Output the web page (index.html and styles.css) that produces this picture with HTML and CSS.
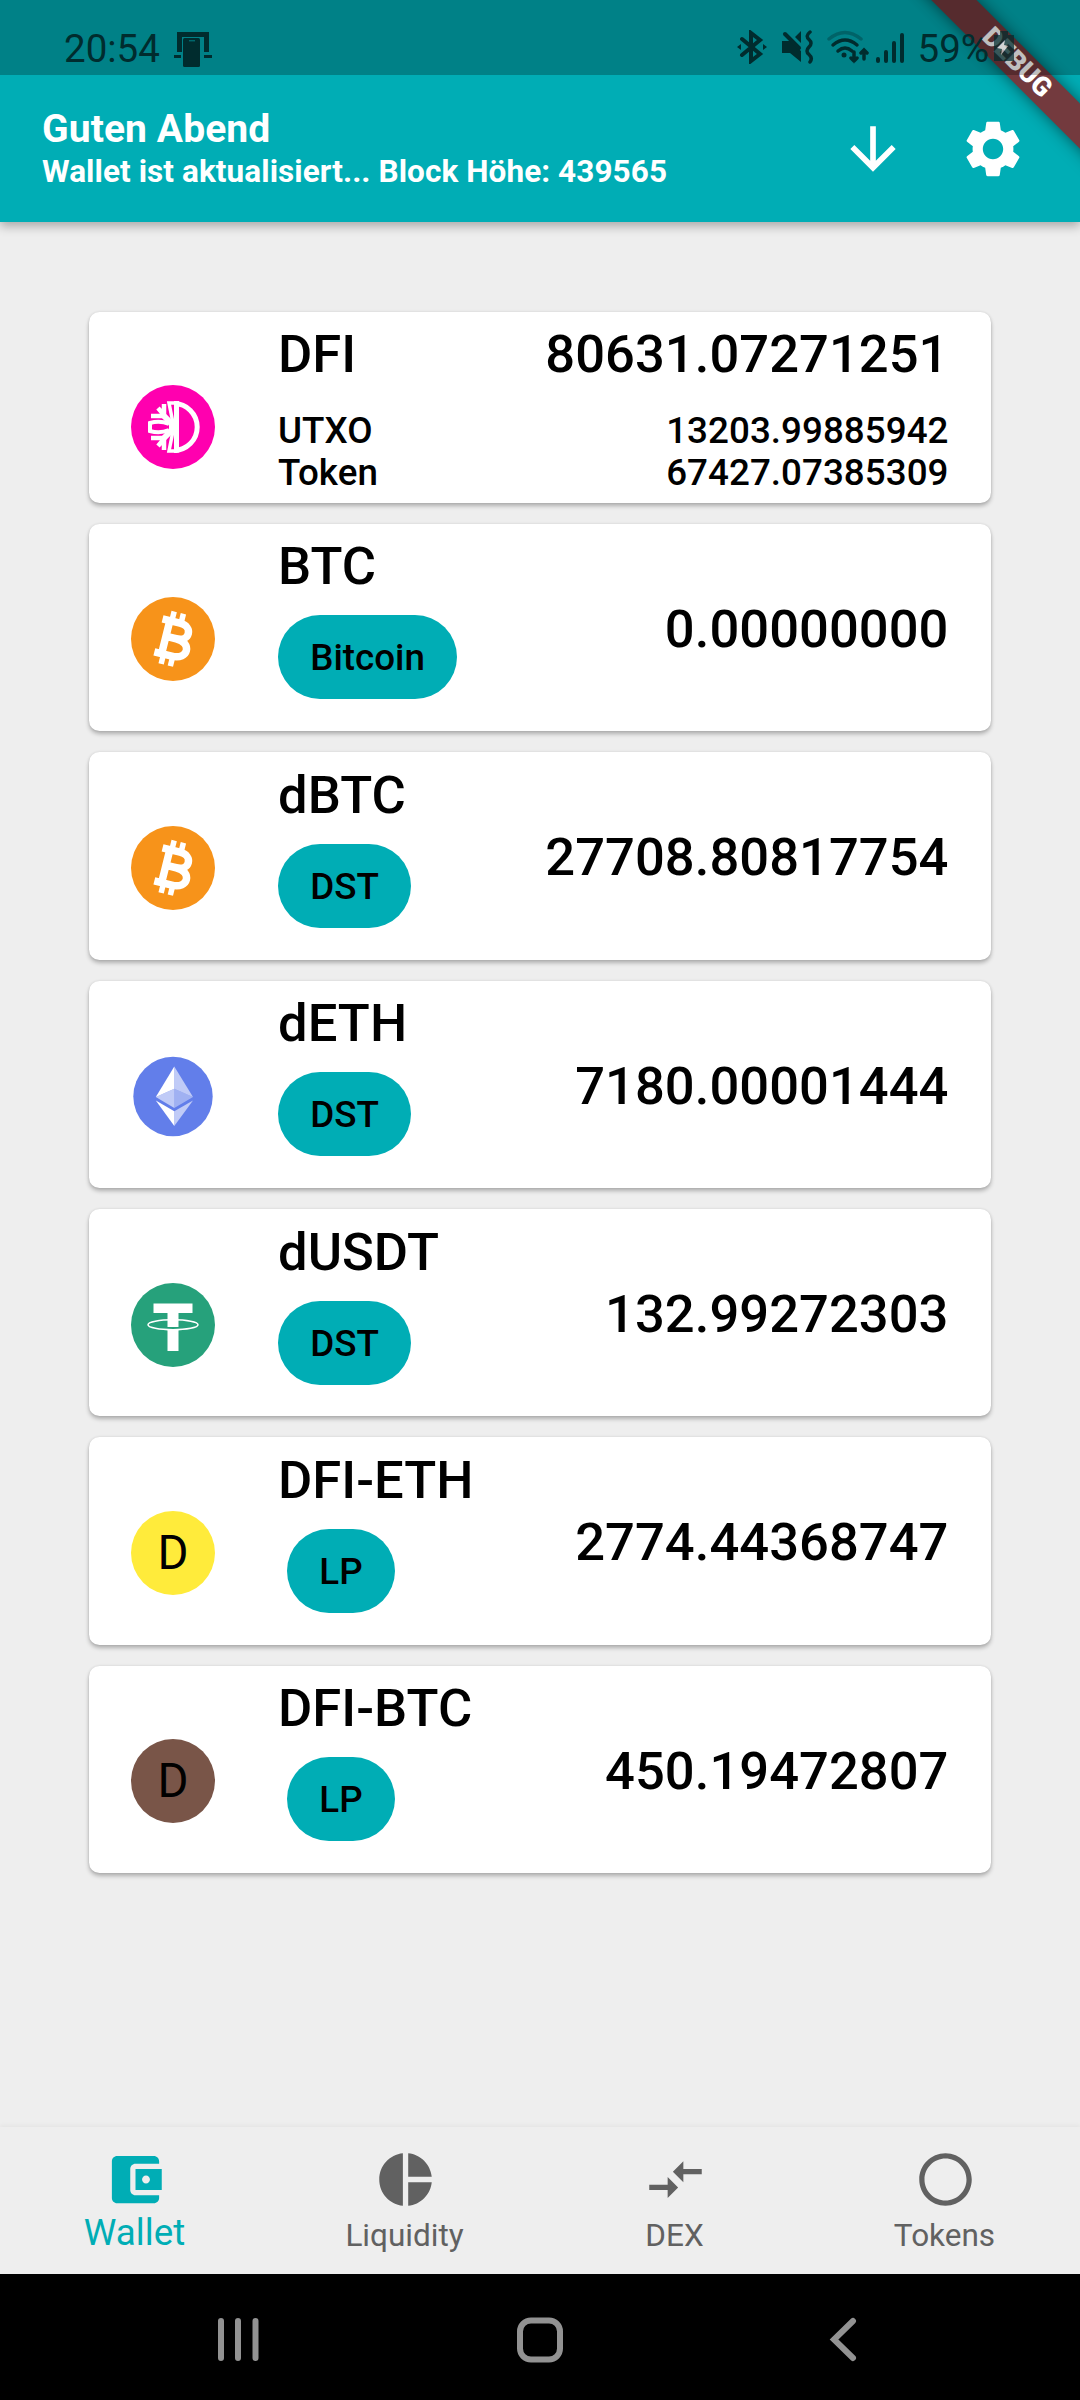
FILE: index.html
```
<!DOCTYPE html>
<html lang="de">
<head>
  <meta charset="UTF-8">
  <title>Wallet</title>
  <link rel="stylesheet" href="styles.css">
</head>
<body>
  <header class="top">
    <div class="status-bar">
      <div class="status-left">
        <span>20:54</span>
        <svg width="38" height="36" viewBox="0 0 38 36">
          <path d="M3 0h32v20h-5V5H8v15H3z"/>
          <path d="M0 23h7v3H0zM30 23h8v3h-8z"/>
          <rect x="9" y="6" width="17" height="29" rx="1.5"/>
          <path class="hole" d="M15 8.300h6v1h-6z"/>
        </svg>
      </div>
      <div class="status-right">
        <svg class="bt" width="30" height="34" viewBox="0 0 30 34">
          <path class="line" d="M5 9l18 15-9 7V3l9 7L5 25"/>
          <path d="M0 17l4-3v6zM30 17l-4-3v6z"/>
        </svg>
        <svg class="mute" width="34" height="34" viewBox="0 0 34 34">
          <path d="M1 11h8l11 10v11L9 23H1zM14 7l6-6v12z"/>
          <path class="line" d="M4 4l14 14"/>
          <path class="line thin" d="M29 2q-5 4-1 7.500t0 7.500 0 7.500 1 7.500"/>
        </svg>
        <svg class="wifi" width="42" height="34" viewBox="0 0 42 34">
          <path class="line thin faint" d="M2 9q16-13 32 0"/>
          <path class="line thin" d="M6 15q12-10 24 0M11 21q7-6 14 0"/>
          <circle cx="17" cy="25" r="2.500"/>
          <path class="line thin" d="M27 22v9M24 28l3 3 3-3M37 29v-9M34 23l3-3 3 3"/>
        </svg>
        <svg class="signal" width="28" height="32" viewBox="0 0 28 32">
          <path class="line" d="M2 27v2M10 20v9M18 11v18M26 3v26"/>
        </svg>
        <span>59%</span>
        <svg class="battery" width="22" height="32" viewBox="0 0 22 32">
          <path d="M7 0h8v4h6v26H1V4h6z"/>
          <path class="bolt" d="M12 9l-8 8 5 1-1 6 7-9-4-1z"/>
        </svg>
      </div>
    </div>
    <div class="app-bar">
      <div class="titles">
        <h1>Guten Abend</h1>
        <p>Wallet ist aktualisiert... Block Höhe: 439565</p>
      </div>
      <div class="actions">
        <svg width="68" height="68" viewBox="0 0 24 24"><path d="M20 12l-1.410-1.410L13 16.170V4h-2v12.170l-5.580-5.590L4 12l8 8 8-8z"/></svg>
        <svg width="68" height="68" viewBox="0 0 24 24"><path d="M19.140 12.940c.04-.3.060-.61.060-.94 0-.32-.02-.64-.07-.94l2.030-1.580c.18-.14.230-.41.120-.61l-1.920-3.320c-.12-.22-.37-.29-.59-.22l-2.390.96c-.5-.38-1.030-.7-1.620-.94l-.36-2.540c-.04-.24-.24-.41-.48-.41h-3.840c-.24 0-.43.17-.47.410l-.36 2.540c-.59.240-1.130.57-1.620.94l-2.390-.96c-.22-.08-.47 0-.59.220L2.740 8.870c-.12.210-.08.470.12.610l2.030 1.580c-.05.300-.09.630-.09.940s.02.640.07.940l-2.030 1.580c-.18.140-.23.410-.12.610l1.920 3.320c.12.220.37.290.59.220l2.390-.96c.5.380 1.030.7 1.620.94l.36 2.540c.05.240.24.410.48.410h3.840c.24 0 .44-.17.470-.41l.36-2.540c.59-.24 1.130-.56 1.620-.94l2.390.96c.22.080.47 0 .59-.22l1.920-3.320c.12-.22.070-.47-.12-.61l-2.010-1.580zM12 15.600c-1.980 0-3.600-1.620-3.600-3.600s1.620-3.600 3.600-3.600 3.600 1.620 3.600 3.600-1.620 3.600-3.600 3.600z"/></svg>
      </div>
    </div>
    <div class="debug-corner"><div class="debug-banner">DEBUG</div></div>
  </header>

  <main class="balances">
    <section class="card card-dfi">
      <svg class="coin" viewBox="0 0 84 84">
        <circle cx="42" cy="42" r="42" fill="#ff00af"/>
        <g fill="none" stroke="#fff">
          <path d="M45.500 16v52M43 18.500a23.200 23.500 0 0 1 0 47" stroke-width="5"/>
          <path d="M44 42h-6M43 41L32 30M43 43L32 54" stroke-width="6"/>
          <path d="M38 39q-9-4-19-1v8q10 3 19-1" stroke-width="4"/>
          <path d="M20 31h13V19M27 23l6 7M20 53h13v12M27 61l6-7" stroke-width="4.500"/>
          <path d="M42 38l-4-20h5M42 46l-4 20h5" stroke-width="3.500"/>
        </g>
      </svg>
      <div class="info">
        <div class="row"><h2>DFI</h2><span class="amount">80631.07271251</span></div>
        <div class="row small"><span>UTXO</span><span>13203.99885942</span></div>
        <div class="row small"><span>Token</span><span>67427.07385309</span></div>
      </div>
    </section>

    <section class="card">
      <svg class="coin" viewBox="0 0 84 84"><use href="#btc"/></svg>
      <div class="info">
        <h2>BTC</h2>
        <div class="chip-box"><span class="chip">Bitcoin</span></div>
      </div>
      <span class="amount">0.00000000</span>
    </section>

    <section class="card">
      <svg class="coin" viewBox="0 0 84 84">
        <g id="btc">
          <circle cx="42" cy="42" r="42" fill="#f7931a"/>
          <g transform="rotate(14 42 42)" fill="none" stroke="#fff">
            <path d="M27 25h18c14 0 14 16 0 16H34M45 41c17 0 17 18 0 18H27M34.500 24v36" stroke-width="7.500"/>
            <path d="M36.500 15v10M46 15v10M36.500 59v10M46 59v10" stroke-width="5.500"/>
          </g>
        </g>
      </svg>
      <div class="info">
        <h2>dBTC</h2>
        <div class="chip-box"><span class="chip">DST</span></div>
      </div>
      <span class="amount">27708.80817754</span>
    </section>

    <section class="card">
      <svg class="coin" viewBox="0 0 84 84">
        <circle cx="42" cy="42.500" r="39.700" fill="#627eea"/>
        <g fill="#fff">
          <path d="M43.300 12.500L24.800 43l18.500-8.300z"/>
          <path d="M43.300 12.500L62 43l-18.700-8.300z" opacity=".6"/>
          <path d="M24.800 43l18.500-8.300V54z" opacity=".6"/>
          <path d="M62 43l-18.700-8.300V54z" opacity=".4"/>
          <path d="M24.800 46.500L43.300 72V57.300z"/>
          <path d="M62 46.500L43.300 72V57.300z" opacity=".6"/>
        </g>
      </svg>
      <div class="info">
        <h2>dETH</h2>
        <div class="chip-box"><span class="chip">DST</span></div>
      </div>
      <span class="amount">7180.00001444</span>
    </section>

    <section class="card">
      <svg class="coin" viewBox="0 0 84 84">
        <circle cx="42" cy="42" r="42" fill="#26a17b"/>
        <path d="M22.500 20.500h39v9.500H47.500v14h-11V30h-14zM36.500 46.500h11V68h-11z" fill="#fff"/>
        <ellipse cx="42" cy="41.700" rx="25" ry="5" fill="none" stroke="#fff" stroke-width="1.500"/>
      </svg>
      <div class="info">
        <h2>dUSDT</h2>
        <div class="chip-box"><span class="chip">DST</span></div>
      </div>
      <span class="amount">132.99272303</span>
    </section>

    <section class="card">
      <div class="coin letter yellow">D</div>
      <div class="info">
        <h2>DFI-ETH</h2>
        <div class="chip-box"><span class="chip">LP</span></div>
      </div>
      <span class="amount">2774.44368747</span>
    </section>

    <section class="card">
      <div class="coin letter brown">D</div>
      <div class="info">
        <h2>DFI-BTC</h2>
        <div class="chip-box"><span class="chip">LP</span></div>
      </div>
      <span class="amount">450.19472807</span>
    </section>
  </main>

  <nav class="tabs">
    <a class="tab active">
      <svg viewBox="0 0 24 24"><path d="M21 18v1c0 1.100-.9 2-2 2H5c-1.110 0-2-.9-2-2V5c0-1.100.890-2 2-2h14c1.100 0 2 .9 2 2v1h-9c-1.110 0-2 .9-2 2v8c0 1.100.890 2 2 2h9zm-9-2h10V8H12v8zm4-2.500c-.83 0-1.500-.67-1.500-1.500s.670-1.500 1.500-1.500 1.500.67 1.500 1.500-.67 1.500-1.500 1.500z"/></svg>
      <span>Wallet</span>
    </a>
    <a class="tab">
      <svg viewBox="0 0 24 24"><path d="M11 2v20c-5.070-.5-9-4.790-9-10s3.930-9.500 9-10zm2.030 0v8.990H22c-.47-4.740-4.240-8.520-8.970-8.990zm0 11.010V22c4.740-.47 8.500-4.250 8.970-8.990h-8.970z"/></svg>
      <span>Liquidity</span>
    </a>
    <a class="tab">
      <svg viewBox="0 0 24 24"><path d="M9.010 14H2v2h7.010v3L13 15l-3.990-4v3zm5.980-1v-3H22V8h-7.010V5L11 9l3.990 4z"/></svg>
      <span>DEX</span>
    </a>
    <a class="tab">
      <svg viewBox="0 0 24 24"><path d="M12 2C6.470 2 2 6.470 2 12s4.470 10 10 10 10-4.470 10-10S17.530 2 12 2zm0 18c-4.410 0-8-3.590-8-8s3.590-8 8-8 8 3.590 8 8-3.590 8-8 8z"/></svg>
      <span>Tokens</span>
    </a>
  </nav>

  <footer class="system-nav">
    <svg width="46" height="46" viewBox="0 0 46 46"><path d="M6 4v37M23 4v37M40.500 4v37"/></svg>
    <svg width="46" height="46" viewBox="0 0 46 46"><rect x="3" y="3.500" width="40" height="39" rx="11"/></svg>
    <svg width="46" height="46" viewBox="0 0 46 46"><path d="M34 4L15 22.500 34 41"/></svg>
  </footer>
</body>
</html>
```
FILE: styles.css
```
* { margin: 0; padding: 0; box-sizing: border-box; }
body {
  width: 1080px;
  height: 2400px;
  display: flex;
  flex-direction: column;
  background: #eee;
  color: #000;
  font-family: Roboto, sans-serif;
  overflow: hidden;
}
svg { display: block; flex: none; }

/* header */
.top {
  position: relative;
  height: 222px;
  background: #00adb5;
  box-shadow: 0 4px 10px rgba(0,0,0,0.3);
}
.status-bar {
  position: relative;
  z-index: 2;
  height: 75px;
  padding: 19px 65px 0 64px;
  display: flex;
  justify-content: space-between;
  background: rgba(0,0,0,0.25);
  color: #002c2e;
  font-size: 38.500px;
  line-height: 59px;
}
.status-bar svg { fill: #002c2e; }
.status-left, .status-right { display: flex; }
.status-left svg { margin: 13px 0 0 14px; }
.status-right svg { margin-top: 11px; }
.status-right .mute { margin-left: 14px; }
.status-right .wifi { margin-left: 12px; }
.status-right .signal { margin: 13px 14px 0 7px; }
.status-right .battery { margin: 12px 0 0 4px; opacity: 0.7; }
.line { fill: none; stroke: #002c2e; stroke-width: 4; stroke-linecap: round; }
.thin { stroke-width: 3.500px; }
.faint { opacity: 0.35; }
.hole { fill: #018287; }
.battery .bolt { fill: #ddd; }
.app-bar {
  height: 147px;
  padding: 0 53px 0 42px;
  display: flex;
  align-items: center;
  justify-content: space-between;
  color: #fff;
}
.titles h1 {
  font-size: 39px;
  line-height: 46px;
  font-weight: 700;
  letter-spacing: 0.100px;
}
.titles p {
  font-size: 31.500px;
  line-height: 39px;
  font-weight: 700;
  letter-spacing: 0.080px;
}
.actions { display: flex; gap: 52px; }
.actions svg { fill: #fff; }
.debug-corner {
  position: absolute;
  top: 0;
  right: 0;
  width: 200px;
  height: 200px;
  overflow: hidden;
}
.debug-banner {
  position: absolute;
  left: -13px;
  top: 47px;
  width: 300px;
  height: 31.500px;
  transform: rotate(45deg);
  background: #733a3e;
  box-shadow: 0 0 16px rgba(0,0,0,0.5);
  color: #fff;
  font-size: 26.800px;
  font-weight: 900;
  line-height: 31.500px;
  text-align: center;
}

/* balance cards */
.balances {
  flex: 1;
  padding: 89.500px 89px 0;
  display: flex;
  flex-direction: column;
  gap: 21px;
}
.card {
  height: 207.400px;
  padding: 0 42.500px 0 42px;
  display: flex;
  background: #fff;
  border-radius: 10.500px;
  box-shadow: 0 3px 4px rgba(0,0,0,0.26), 0 0 3px rgba(0,0,0,0.1);
}
.card-dfi { height: 191.400px; }
.coin {
  width: 84px;
  height: 84px;
  flex: none;
  margin: 73.500px 63px 0 0;
}
.letter {
  border-radius: 50%;
  font-size: 47.250px;
  line-height: 85px;
  text-align: center;
}
.yellow { background: #ffeb3b; }
.brown { background: #795548; }
.info { flex: 1; padding-top: 11.500px; }
.info h2, .amount {
  font-size: 52.500px;
  line-height: 62px;
  font-weight: 500;
  letter-spacing: 0.050px;
}
.card > .amount { margin-top: 74px; }
.row { display: flex; justify-content: space-between; }
.small {
  font-size: 36.750px;
  line-height: 42px;
  font-weight: 500;
  letter-spacing: 0.040px;
}
.row + .small { margin-top: 24.500px; }
.small + .small { margin-top: 0; }
.chip-box {
  width: fit-content;
  min-width: 126px;
  margin-top: 18px;
  display: flex;
  justify-content: center;
}
.chip {
  height: 84px;
  padding: 0 32.200px;
  border-radius: 42px;
  background: #00adb5;
  font-size: 36.750px;
  line-height: 86px;
  font-weight: 500;
}

/* bottom navigation */
.tabs {
  height: 147px;
  display: flex;
  background: #eee;
  box-shadow: 0 -2px 4px rgba(0,0,0,0.04);
}
.tab {
  flex: 1;
  padding-top: 21px;
  display: flex;
  flex-direction: column;
  align-items: center;
  color: #616161;
  font-size: 31.500px;
  line-height: 50px;
}
.tab span { margin-left: -1px; }
.tab svg {
  width: 63px;
  height: 63px;
  fill: #616161;
}
.tab.active { color: #00adb5; font-size: 36.750px; line-height: 43px; }
.tab.active svg { fill: #00adb5; }

/* android buttons */
.system-nav {
  height: 126px;
  padding: 5px 215px 0;
  display: flex;
  align-items: center;
  justify-content: space-between;
  background: #000;
}
.system-nav svg {
  fill: none;
  stroke: #929292;
  stroke-width: 6;
  stroke-linecap: round;
}
```
